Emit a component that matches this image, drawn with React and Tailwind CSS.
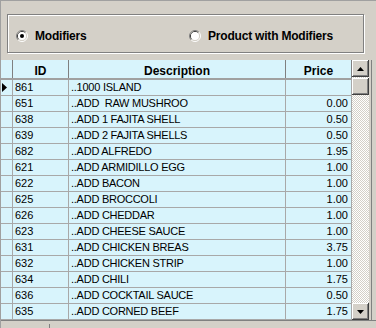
import React from 'react';

const rows = [
  ['861', '..1000 ISLAND', ''],
  ['651', '..ADD  RAW MUSHROO', '0.00'],
  ['638', '..ADD 1 FAJITA SHELL', '0.50'],
  ['639', '..ADD 2 FAJITA SHELLS', '0.50'],
  ['682', '..ADD ALFREDO', '1.95'],
  ['621', '..ADD ARMIDILLO EGG', '1.00'],
  ['622', '..ADD BACON', '1.00'],
  ['625', '..ADD BROCCOLI', '1.00'],
  ['626', '..ADD CHEDDAR', '1.00'],
  ['623', '..ADD CHEESE SAUCE', '1.00'],
  ['631', '..ADD CHICKEN BREAS', '3.75'],
  ['632', '..ADD CHICKEN STRIP', '1.00'],
  ['634', '..ADD CHILI', '1.75'],
  ['636', '..ADD COCKTAIL SAUCE', '0.50'],
  ['635', '..ADD CORNED BEEF', '1.75'],
];

// classic sunken radio button
function Radio({ checked }) {
  return (
    <svg width="12" height="12" viewBox="0 0 12 12" className="shrink-0">
      <path d="M2.11 9.89A5.5 5.5 0 0 1 9.89 2.11" fill="none" stroke="#808080" />
      <path d="M9.89 2.11A5.5 5.5 0 0 1 2.11 9.89" fill="none" stroke="#fff" />
      <path d="M2.82 9.18A4.5 4.5 0 0 1 9.18 2.82" fill="none" stroke="#404040" />
      <path d="M9.18 2.82A4.5 4.5 0 0 1 2.82 9.18" fill="none" stroke="#d4d0c8" />
      <circle cx="6" cy="6" r="4" fill="#fff" />
      {checked && <circle cx="6" cy="6" r="2" fill="#000" />}
    </svg>
  );
}

function ScrollButton({ down }) {
  return (
    <div className="w-[17px] h-[17px] bg-[#d4d0c8] flex items-center justify-center shadow-[inset_-1px_-1px_#404040,inset_1px_1px_#fff,inset_-2px_-2px_#808080]">
      <svg width="7" height="4" viewBox="0 0 7 4">
        {down ? <path d="M0 0H7L3.5 4Z" fill="#000" /> : <path d="M0 4H7L3.5 0Z" fill="#000" />}
      </svg>
    </div>
  );
}

export default function App() {
  return (
    <div className="w-[376px] h-[328px] bg-[#d4d0c8] overflow-hidden flex flex-col font-['Liberation_Sans',Arial,sans-serif] text-black border-t border-l border-[#a0a0a0]">
      {/* option group */}
      <div className="h-[59px] pt-[13px] pl-[6px]">
        <div className="w-[357px] h-[39px] border border-[#808080] shadow-[1px_1px_0_#fff,inset_1px_1px_0_#fff] flex items-center pt-[5px] pl-[8px] text-[12px] font-bold tracking-[-0.2px]">
          <div className="flex items-center gap-[7px] w-[173px]">
            <Radio checked />
            <span>Modifiers</span>
          </div>
          <div className="flex items-center gap-[7px]">
            <Radio />
            <span>Product with Modifiers</span>
          </div>
        </div>
      </div>

      {/* grid */}
      <div className="flex h-[260px]">
        <div className="w-[351px] flex flex-col bg-[#d8f4fc]">
          <div className="flex h-[20px] border-b-2 border-[#a0a0a0] text-[12px] font-bold">
            <div className="w-[12px] border-r border-[#808080]" />
            <div className="w-[56px] border-r border-[#808080] flex items-center justify-center pt-[3px]">ID</div>
            <div className="w-[217px] border-r border-[#808080] flex items-center justify-center pt-[3px]">Description</div>
            <div className="w-[66px] border-r border-[#808080] flex items-center justify-center pt-[3px]">Price</div>
          </div>
          {rows.map(([id, desc, price], i) => (
            <div key={id} className="flex h-[16px] border-b border-[#a8a8a8] text-[11px] leading-[15px]">
              <div className="w-[12px] border-r border-[#a8a8a8] flex items-center pl-[1px]">
                {i === 0 && (
                  <svg width="6" height="9" viewBox="0 0 6 9">
                    <path d="M0 0L5 4.5L0 9Z" fill="#000" />
                  </svg>
                )}
              </div>
              <div className="w-[56px] border-r border-[#a8a8a8] pl-[2px]">{id}</div>
              <div className="w-[217px] border-r border-[#a8a8a8] pl-[2px] whitespace-pre tracking-[-0.25px]">{desc}</div>
              <div className="w-[66px] border-r border-[#a8a8a8] pr-[3px] text-right">{price}</div>
            </div>
          ))}
        </div>

        {/* vertical scrollbar */}
        <div className="w-[17px] flex flex-col bg-[repeating-conic-gradient(#fff_0_25%,#d4d0c8_0_50%)] bg-size-[2px_2px]">
          <ScrollButton />
          <div className="h-[17px] mt-[1px] bg-[#d4d0c8] shadow-[inset_-1px_-1px_#404040,inset_1px_1px_#fff,inset_-2px_-2px_#808080]" />
          <div className="flex-1" />
          <ScrollButton down />
        </div>
        <div className="w-[2px]" />
        <div className="w-px bg-[#808080]" />
      </div>

      {/* status strip */}
      <div className="flex-1 border-t border-[#808080] pl-[48px] pt-[3px]">
        <div className="w-px h-full bg-[#808080]" />
      </div>
    </div>
  );
}
